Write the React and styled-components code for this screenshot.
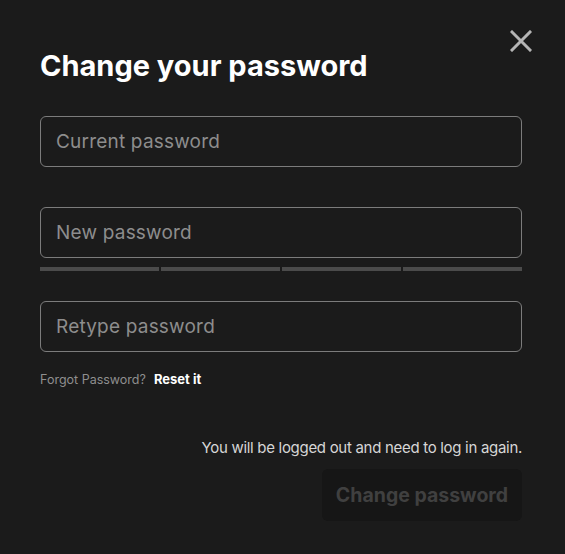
import React from "react";
import styled, { createGlobalStyle } from "styled-components";

const Global = createGlobalStyle`
  html, body { margin: 0; padding: 0; background: #1b1b1b; }
  body { font-family: Inter, "Noto Sans", sans-serif; -webkit-font-smoothing: antialiased; }
  * { box-sizing: border-box; }
`;

const Modal = styled.div`
  position: relative;
  width: 565px;
  height: 554px;
  padding: 49px 43px 0 40px;
  display: flex;
  flex-direction: column;
  background: #1b1b1b;
`;

const Close = styled.button`
  position: absolute;
  top: 28px;
  right: 31px;
  width: 26px;
  height: 26px;
  padding: 0;
  border: none;
  background: transparent;
  display: flex;
  align-items: center;
  justify-content: center;
  cursor: pointer;
`;

const Title = styled.h1`
  margin: 0 0 33px;
  font-size: 29px;
  line-height: 34px;
  font-weight: 700;
  color: #ffffff;
  letter-spacing: 0;
`;

const Field = styled.input`
  width: 100%;
  height: 51px;
  padding: 0 15px;
  border: 1px solid #7c7c7c;
  border-radius: 6px;
  background: transparent;
  color: #fff;
  font-family: Inter, "Noto Sans", sans-serif;
  font-size: 19px;
  outline: none;
  margin-bottom: ${(p) => p.$mb || 0}px;
  &::placeholder { color: #8d8d8d; letter-spacing: 0.2px; }
`;

const Strength = styled.div`
  display: grid;
  grid-template-columns: repeat(4, 1fr);
  gap: 2px;
  margin: 9px 0 30px;
`;

const Bar = styled.div`
  height: 4px;
  background: #4b4b4b;
`;

const ForgotRow = styled.div`
  margin-top: 19px;
  display: flex;
  align-items: baseline;
  gap: 8px;
  line-height: 16px;
`;

const Muted = styled.span`
  color: #8f8f8f;
  font-size: 12.5px;
  letter-spacing: 0;
`;

const Link = styled.a`
  color: #ffffff;
  font-size: 13px;
  font-weight: 700;
  text-decoration: none;
  letter-spacing: 0;
`;

const Footer = styled.div`
  margin-top: 50px;
  display: flex;
  flex-direction: column;
  align-items: flex-end;
  gap: 11px;
`;

const Note = styled.p`
  margin: 0;
  font-size: 15px;
  line-height: 20px;
  color: #d6d6d6;
  letter-spacing: -0.3px;
`;

const Submit = styled.button`
  width: 200px;
  height: 52px;
  border: none;
  border-radius: 6px;
  background: #161616;
  color: #404040;
  font-family: Inter, "Noto Sans", sans-serif;
  font-size: 19.5px;
  font-weight: 700;
  letter-spacing: 0;
`;

export default function App() {
  return (
    <>
      <Global />
      <Modal>
        <Close aria-label="Close">
          <svg width="22" height="22" viewBox="0 0 22 22">
            <path d="M2 2 L20 20 M20 2 L2 20" stroke="#b5b5b5" strokeWidth="3" strokeLinecap="square" />
          </svg>
        </Close>
        <Title>Change your password</Title>
        <Field type="password" placeholder="Current password" $mb={40} />
        <Field type="password" placeholder="New password" />
        <Strength>
          <Bar />
          <Bar />
          <Bar />
          <Bar />
        </Strength>
        <Field type="password" placeholder="Retype password" />
        <ForgotRow>
          <Muted>Forgot Password?</Muted>
          <Link href="#">Reset it</Link>
        </ForgotRow>
        <Footer>
          <Note>You will be logged out and need to log in again.</Note>
          <Submit disabled>Change password</Submit>
        </Footer>
      </Modal>
    </>
  );
}
